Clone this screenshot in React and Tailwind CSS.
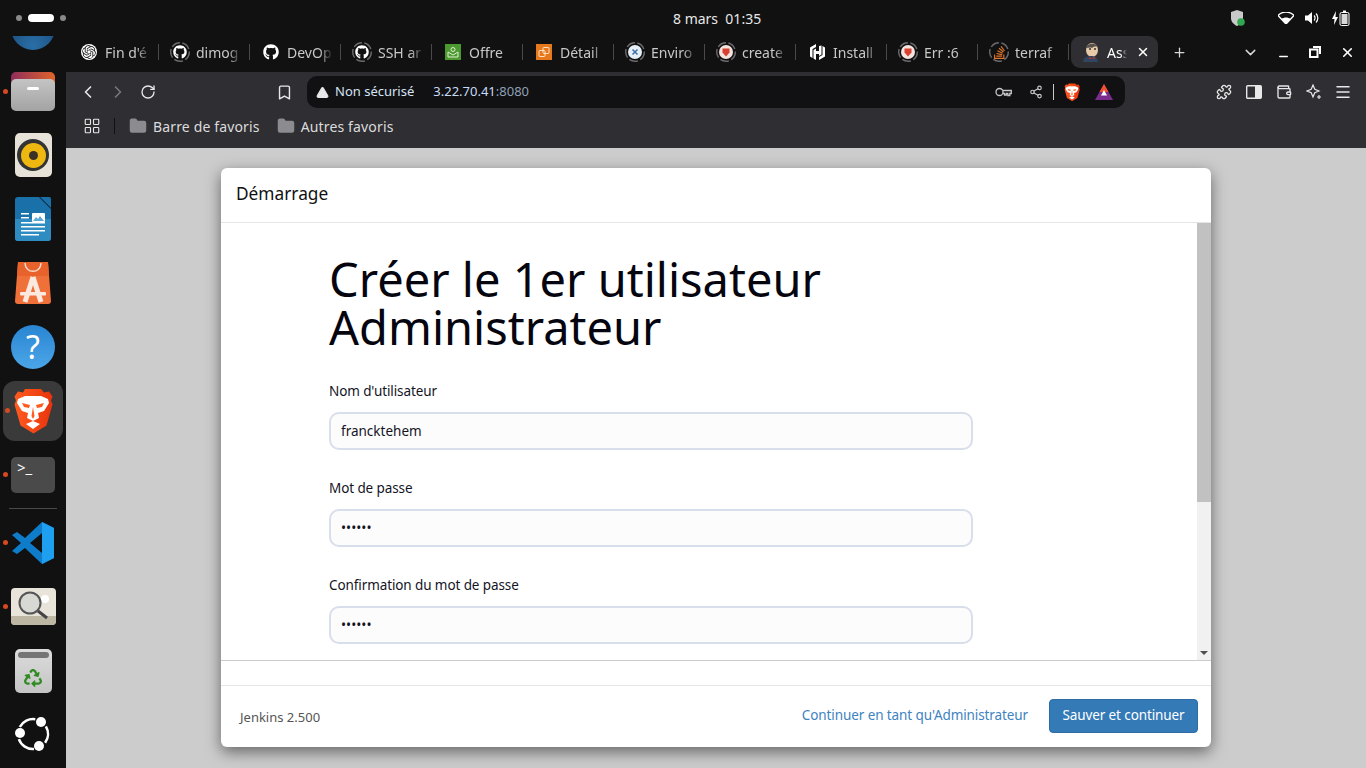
import { FaGithub, FaRecycle } from 'react-icons/fa';
import { SiOpenai, SiStackoverflow } from 'react-icons/si';
import {
  ChevronLeft, ChevronRight, RotateCw, Bookmark, TriangleAlert, Share2, Puzzle, Wallet, Menu,
  X, Plus, ChevronDown, Minus, LayoutGrid, Folder,
} from 'lucide-react';

const font = { fontFamily: '"Noto Sans", sans-serif' };

function BraveLogo({ size = 40 }) {
  return (
    <svg width={size} height={size * 1.15} viewBox="0 0 40 46">
      <defs>
        <linearGradient id="braveFill" x1="0" y1="0" x2="1" y2="0">
          <stop offset="0" stopColor="#ff5a1f" />
          <stop offset="1" stopColor="#e8340c" />
        </linearGradient>
      </defs>
      <path d="M12 1h16l3 3.500 5-1 3.500 5-1.500 4 1.500 4-6 21-13 8-13-8-6-21 1.500-4-1.500-4 3.500-5 5 1z" fill="url(#braveFill)" />
      <path d="M5 11l7-3h16l7 3 1 4-5 8-6 2 1 5-6 3-6-3 1-5-6-2-5-8z" fill="#fff" />
      <path d="M9 15l8 2-1 3-5-1zM31 15l-8 2 1 3 5-1z" fill="#ff5a1f" />
      <path d="M20 19l-1.500 9 1.500 3 1.500-3z" fill="#ff5a1f" />
      <path d="M13 36l7-3 7 3-7 5z" fill="#fff" />
    </svg>
  );
}

function BatLogo() {
  return (
    <svg width="18" height="16" viewBox="0 0 18 16">
      <path d="M9 0l9 16H0z" fill="#7b2d8e" />
      <path d="M9 0l4.500 8h-9z" fill="#f0502d" />
      <path d="M9 6l3 5.500H6z" fill="#fff" />
    </svg>
  );
}

function HashiIcon() {
  return (
    <svg width="15" height="16" viewBox="0 0 15 16" fill="#fff">
      <path d="M6 0L0 3.500v9l2.500 1.500V5l3.500-2zM9 2v5H6V4.500L3.500 6v8.500L6 16v-6h3v2l2.500-1.500V1.500zM12.500 2v9L9 13v3l6-3.500v-9z" />
    </svg>
  );
}

function JenkinsIcon() {
  return (
    <svg width="20" height="20" viewBox="0 0 20 20">
      <ellipse cx="11" cy="8" rx="6" ry="7" fill="#e8c9a8" />
      <path d="M5 6c1-5 10-6 12-1-3-1-5 0-6 1-2-1-4 0-6 0z" fill="#55504c" />
      <circle cx="9" cy="7" r="1" fill="#333" />
      <circle cx="14" cy="7" r="1" fill="#333" />
      <path d="M2 20c0-4 4-6 8-6s7 2 7 6z" fill="#2f4562" />
      <path d="M8 15l3 1 3-1v2l-3-.5-3 .5z" fill="#b8312f" />
    </svg>
  );
}

function ShieldDot() {
  return (
    <svg width="14" height="14" viewBox="0 0 14 14">
      <circle cx="7" cy="7" r="7" fill="#f4e3df" />
      <path d="M3.500 3.500h7v4L7 11.500l-3.500-4z" fill="#d8412f" />
    </svg>
  );
}

function EnvIcon() {
  return (
    <svg width="14" height="14" viewBox="0 0 14 14">
      <circle cx="7" cy="7" r="7" fill="#e6eef8" />
      <path d="M4.500 4.500l5 5M9.500 4.500l-5 5" stroke="#3f6ea8" strokeWidth="1.500" />
    </svg>
  );
}

function OfferIcon() {
  return (
    <div className="flex h-4 w-4 items-center justify-center bg-[#4c9a2f]">
      <svg width="12" height="12" viewBox="0 0 12 12" fill="none" stroke="#dff0d5" strokeWidth="1">
        <circle cx="6" cy="3.500" r="2" />
        <path d="M1 6v5h10V6L6 9z" />
      </svg>
    </div>
  );
}

function DetailIcon() {
  return (
    <div className="flex h-4 w-4 items-center justify-center bg-[#e8791a]">
      <svg width="12" height="12" viewBox="0 0 12 12" fill="none" stroke="#fbe3cd" strokeWidth="1">
        <rect x="1" y="4.500" width="6" height="6" rx="1" />
        <rect x="5" y="1.500" width="6" height="6" rx="1" />
      </svg>
    </div>
  );
}

function Ring() {
  return (
    <svg className="absolute inset-0" width="20" height="20" viewBox="0 0 20 20" fill="none">
      <circle cx="10" cy="10" r="9.300" stroke="#6b6b6e" strokeWidth="1.400" strokeDasharray="9 2.500" />
    </svg>
  );
}

function KeyIcon() {
  return (
    <svg width="17" height="10" viewBox="0 0 17 10" fill="none" stroke="#c8c8c8" strokeWidth="1.300">
      <circle cx="4.500" cy="5" r="3.500" />
      <path d="M8 3.500h8.300v3h-1.500v2h-2v-2h-1.500v1.500H9.500V6.500H8" />
    </svg>
  );
}

const tabs = [
  { label: "Fin d'é", icon: <SiOpenai className="rounded-full bg-white p-[1px] text-[#222]" size={16} /> },
  { label: 'dimog', ring: true, icon: <FaGithub className="text-white" size={14} /> },
  { label: 'DevOp', icon: <FaGithub className="text-white" size={16} /> },
  { label: 'SSH ar', ring: true, icon: <FaGithub className="text-white" size={14} /> },
  { label: 'Offre', icon: <OfferIcon /> },
  { label: 'Détail', icon: <DetailIcon /> },
  { label: 'Enviro', ring: true, icon: <EnvIcon /> },
  { label: 'create', ring: true, icon: <ShieldDot /> },
  { label: 'Install', icon: <HashiIcon /> },
  { label: 'Err :6', ring: true, icon: <ShieldDot /> },
  { label: 'terraf', ring: true, icon: <SiStackoverflow className="text-[#e0752c]" size={13} /> },
];

function Tab({ tab }) {
  return (
    <div className="flex h-4 w-[91px] shrink-0 items-center border-r border-[#4a4a4d] pl-[11px]">
      <div className="relative flex h-5 w-5 shrink-0 items-center justify-center">
        {tab.ring && <Ring />}
        {tab.icon}
      </div>
      <span className="ml-[6px] w-[46px] whitespace-nowrap text-[14px] text-[#c8c8c8] [mask-image:linear-gradient(to_right,black_70%,transparent)]">
        {tab.label}
      </span>
    </div>
  );
}

function TopBar() {
  return (
    <div className="relative flex h-9 shrink-0 items-center bg-[#111112] pl-4 pr-4">
      <div className="flex items-center gap-[6px]">
        <div className="h-[6px] w-[6px] rounded-full bg-[#8a8a8a]" />
        <div className="h-2 w-[26px] rounded-full bg-white" />
        <div className="h-[6px] w-[6px] rounded-full bg-[#8a8a8a]" />
      </div>
      <div className="ml-[607px] w-[90px] whitespace-pre text-[14px] text-[#e8e8e8]">8 mars  01:35</div>
      <div className="ml-auto flex items-center">
        <svg width="16" height="18" viewBox="0 0 16 18">
          <path d="M7 1l6 2v6c0 4-3 6.500-6 8-3-1.500-6-4-6-8V3z" fill="#c9c9c9" />
          <circle cx="11" cy="13" r="3.800" fill="#2fa84f" />
        </svg>
        <svg className="ml-[32px]" width="16" height="12" viewBox="0 0 16 12">
          <path d="M8 12L0 3.500C4.500-1 11.500-1 16 3.500z" fill="none" stroke="#fff" strokeWidth="1.400" />
          <path d="M8 12L3.500 7c2.500-2 6.500-2 9 0z" fill="#fff" />
        </svg>
        <svg className="ml-[11px]" width="15" height="14" viewBox="0 0 15 14" fill="#fff">
          <path d="M0 4.500h3L7 1v12L3 9.500H0z" />
          <path d="M9 4.500a3.500 3.500 0 0 1 0 5M11 2.500a6.500 6.500 0 0 1 0 9" fill="none" stroke="#fff" strokeWidth="1.200" />
        </svg>
        <svg className="ml-[12px]" width="18" height="16" viewBox="0 0 18 16">
          <path d="M4 1L0 9h2.500L2 15l4-8H3.500z" fill="#fff" />
          <rect x="8" y="2.500" width="9" height="13" rx="1.500" fill="none" stroke="#fff" />
          <rect x="9.500" y="4" width="6" height="10" fill="#d9d9d9" />
          <rect x="11" y="0.500" width="3" height="2" fill="#fff" />
        </svg>
      </div>
    </div>
  );
}

function DockDot() {
  return <div className="absolute left-[3px] top-1/2 -mt-[3px] h-[5px] w-[5px] rounded-full bg-[#d8491f]" />;
}

function Dock() {
  return (
    <div className="flex w-[66px] shrink-0 flex-col items-center bg-[#111112]">
      <div className="h-[14px] w-[44px] overflow-hidden">
        <div className="-mt-[30px] h-[44px] w-[44px] rounded-full bg-[radial-gradient(circle_at_50%_90%,#2a6fa8,#123a63)]" />
      </div>

      <div className="relative mt-[22px] flex w-full justify-center">
        <DockDot />
        <div className="relative h-[39px] w-[44px]">
          <div className="absolute left-0 top-0 h-[20px] w-[44px] rounded-t-[5px] bg-[linear-gradient(to_right,#8f2d5c,#e0642a)]" />
          <div className="absolute left-0 right-0 top-[7px] flex h-[32px] justify-center rounded-[5px] bg-[linear-gradient(#c4c4c4,#a3a3a3)] pt-[8px]">
            <div className="h-[3px] w-[12px] rounded-sm bg-white" />
          </div>
        </div>
      </div>

      <div className="mt-[22px] flex h-[44px] w-[37px] items-center justify-center rounded-[5px] bg-[#e6e2d8]">
        <div className="flex h-[32px] w-[32px] items-center justify-center rounded-full bg-[#333]">
          <div className="flex h-[25px] w-[25px] items-center justify-center rounded-full bg-[#efb810]">
            <div className="h-[9px] w-[9px] rounded-full bg-[#3a3226]" />
          </div>
        </div>
      </div>

      <svg className="mt-[20px]" width="36" height="44" viewBox="0 0 36 44">
        <path d="M3 0h21l12 12v29a3 3 0 0 1-3 3H3a3 3 0 0 1-3-3V3a3 3 0 0 1 3-3z" fill="#1a70a8" />
        <path d="M0 22h36v19a3 3 0 0 1-3 3H3a3 3 0 0 1-3-3z" fill="#2e8cc0" />
        <path d="M25 0h9a2 2 0 0 1 2 2v9z" fill="#1a70a8" />
        <rect x="6" y="16" width="8" height="1.500" fill="#fff" />
        <rect x="6" y="20" width="8" height="1.500" fill="#fff" />
        <rect x="17" y="16" width="13" height="9" rx="1" fill="#fff" />
        <path d="M18 24l3-4 2 2 2-3 4 5z" fill="#5da8d5" />
        <rect x="6" y="25" width="24" height="1.500" fill="#fff" />
        <rect x="6" y="29" width="24" height="1.500" fill="#fff" />
        <rect x="6" y="33" width="24" height="1.500" fill="#fff" />
        <rect x="6" y="37" width="18" height="1.500" fill="#fff" />
      </svg>

      <svg className="mt-[21px]" width="36" height="42" viewBox="0 0 36 42">
        <path d="M3 0h30l3 39a3 3 0 0 1-3 3H3a3 3 0 0 1-3-3z" fill="#f0703a" />
        <path d="M3 0h30l1 14H2z" fill="#e8622c" />
        <path d="M10 1c0 11 16 11 16 0" fill="none" stroke="#f6d8c8" strokeWidth="1.500" />
        <path d="M18 15L10 40M18 15l8 25" fill="none" stroke="#fbe9df" strokeWidth="5" />
        <rect x="5" y="30" width="26" height="3.500" rx="1" fill="#fbe9df" />
      </svg>

      <div className="mt-[21px] flex h-[44px] w-[44px] items-center justify-center rounded-full bg-[linear-gradient(#2a85d3,#4ba6e8)] text-[32px] text-white">?</div>

      <div className="relative mt-[12px] flex h-[60px] w-[60px] items-center justify-center rounded-[12px] bg-[#3a3a3a]">
        <div className="absolute left-[2px] top-1/2 -mt-[3px] h-[5px] w-[5px] rounded-full bg-[#d8491f]" />
        <BraveLogo size={40} />
      </div>

      <div className="relative mt-[16px] flex w-full justify-center">
        <DockDot />
        <div className="h-[36px] w-[44px] rounded-[5px] bg-[#4a4a4a] pl-[6px] pt-[1px] text-[15px] leading-[18px] text-white">
          &gt;_
        </div>
      </div>

      <div className="mt-[15px] h-px w-[48px] bg-[#4a4a4a]" />

      <div className="relative mt-[13px] flex w-full justify-center">
        <DockDot />
        <svg width="42" height="42" viewBox="0 0 42 42">
          <path d="M30 0l12 6v30l-12 6-17-16-8 6-5-3 9-8-9-8 5-3 8 6z" fill="#0f7cc9" />
          <path d="M30 0l12 6v30l-12 6z" fill="#1f9ff0" />
          <path d="M30 11L18 21l12 10z" fill="#111112" />
        </svg>
      </div>

      <div className="relative mt-[24px] flex w-full justify-center">
        <DockDot />
        <svg width="45" height="37" viewBox="0 0 45 37">
          <rect width="45" height="37" rx="4" fill="#e8e4da" />
          <path d="M0 28h45v5a4 4 0 0 1-4 4H4a4 4 0 0 1-4-4z" fill="#bdb6a3" />
          <circle cx="34" cy="11" r="4" fill="#fff" />
          <circle cx="19" cy="15" r="10.500" fill="#d8d8d4" stroke="#555" strokeWidth="2" />
          <path d="M27 23l9 7" stroke="#444" strokeWidth="3" />
        </svg>
      </div>

      <div className="mt-[24px] flex h-[44px] w-[37px] flex-col items-center rounded-[5px] bg-[linear-gradient(#dcdcdc,#c4c4c4)] pt-[3px]">
        <div className="h-[6px] w-[31px] rounded-sm bg-[#757575]" />
        <FaRecycle className="mt-[11px] text-[#2e8b1f]" size={18} />
      </div>

      <svg className="mt-[24px]" width="36" height="34" viewBox="0 0 36 34">
        <g fill="none" stroke="#fff" strokeWidth="2.600">
          <path d="M30.900 9.300A15 15 0 0 1 30.100 25.800" />
          <path d="M19 32A15 15 0 0 1 3.900 22.100" />
          <path d="M4.800 10A15 15 0 0 1 20.300 2.200" />
        </g>
        <circle cx="5" cy="16" r="5" fill="#fff" />
        <circle cx="26" cy="5" r="5" fill="#fff" />
        <circle cx="24" cy="29" r="5" fill="#fff" />
      </svg>
    </div>
  );
}

function BrowserChrome() {
  return (
    <>
      <div className="flex h-9 shrink-0 items-start bg-[#111112] pl-[2px]">
        <div className="flex h-4 translate-y-2 items-center">
          {tabs.map((t) => <Tab key={t.label} tab={t} />)}
        </div>
        <div className="ml-[2px] flex h-8 w-[87px] shrink-0 items-center rounded-[9px] bg-[#2e2e33] pl-[10px]">
          <JenkinsIcon />
          <span className="ml-[6px] w-[20px] whitespace-nowrap text-[14px] text-white [mask-image:linear-gradient(to_right,black_70%,transparent)]">Ass</span>
          <X className="ml-[9px] text-white" size={14} strokeWidth={2.500} />
        </div>
        <div className="flex h-8 items-center text-[#d8d8d8]">
          <Plus className="ml-[14px]" size={15} />
          <ChevronDown className="ml-[55px]" size={17} />
          <Minus className="ml-[18px] mt-[8px] text-white" size={13} strokeWidth={2.500} />
          <svg className="ml-[19px]" width="12" height="12" viewBox="0 0 12 12" fill="none" stroke="#fff" strokeWidth="2">
            <rect x="1" y="3.500" width="7.500" height="7.500" />
            <path d="M4 1h7v7" />
          </svg>
          <X className="ml-[19px] text-white" size={15} strokeWidth={2.500} />
        </div>
      </div>

      <div className="flex h-10 shrink-0 items-center bg-[#2e2e33] text-[#e8e8e8]">
        <ChevronLeft className="ml-[12px]" size={20} />
        <ChevronRight className="ml-[10px] text-[#77777b]" size={20} />
        <RotateCw className="ml-[12px]" size={16} />
        <Bookmark className="ml-[120px]" size={17} />
        <div className="ml-[14px] flex h-8 w-[818px] items-center rounded-[10px] bg-[#111114] pl-[9px] pr-[12px] text-[13px]">
          <TriangleAlert className="fill-[#e8e8e8] text-[#e8e8e8]" size={13} />
          <span className="ml-[6px] text-[#d6e4f5]">Non sécurisé</span>
          <span className="ml-[19px] text-[#c8ddf5]">3.22.70.41<span className="text-[#8fa0b5]">:8080</span></span>
          <div className="ml-auto flex items-center">
            <KeyIcon />
            <Share2 className="ml-[17px] text-[#c8c8c8]" size={14} />
            <div className="ml-[10px] h-4 w-px bg-[#c8c8c8]" />
            <div className="ml-[10px]"><BraveLogo size={16} /></div>
            <div className="ml-[15px]"><BatLogo /></div>
          </div>
        </div>
        <Puzzle className="ml-[91px]" size={16} />
        <svg className="ml-[14px]" width="16" height="14" viewBox="0 0 16 14">
          <rect x="0.700" y="0.700" width="14.600" height="12.600" rx="1" fill="none" stroke="#e8e8e8" strokeWidth="1.400" />
          <rect x="9" y="1" width="6" height="12" fill="#e8e8e8" />
        </svg>
        <Wallet className="ml-[14px]" size={16} />
        <svg className="ml-[14px]" width="16" height="16" viewBox="0 0 16 16" fill="none" stroke="#e8e8e8" strokeWidth="1.200">
          <path d="M7 1l1.800 4.200L13 7l-4.200 1.800L7 13l-1.800-4.200L1 7l4.200-1.800z" />
          <path d="M13 11v4M11 13h4" />
        </svg>
        <Menu className="ml-[12px]" size={18} />
      </div>

      <div className="flex h-9 shrink-0 items-center bg-[#2e2e33] pb-[8px] text-[14px] tracking-[0.15px] text-[#dcdcdc]">
        <LayoutGrid className="ml-[17px] text-[#e8e8e8]" size={18} strokeWidth={1.500} />
        <div className="ml-[13px] h-4 w-px bg-[#111]" />
        <Folder className="ml-[14px] fill-[#8c8c90] text-[#8c8c90]" size={18} />
        <span className="ml-[6px]">Barre de favoris</span>
        <Folder className="ml-[17px] fill-[#8c8c90] text-[#8c8c90]" size={18} />
        <span className="ml-[6px]">Autres favoris</span>
      </div>
    </>
  );
}

function Field({ label, type = 'text', value }) {
  return (
    <div className="mb-[28px]">
      <label className="mb-[11px] block text-[13.5px] leading-[20px] tracking-[-0.1px] text-[#14141f]">{label}</label>
      <input
        readOnly
        type={type}
        defaultValue={value}
        className="block h-[38px] w-[644px] rounded-[10px] border-2 border-[#d8deea] bg-[#fcfcfd] px-[10px] text-[13.5px] text-[#14141f] outline-none"
      />
    </div>
  );
}

function SetupDialog() {
  return (
    <div className="flex h-[579px] w-[990px] flex-col overflow-hidden rounded-[6px] bg-white shadow-[0_5px_15px_rgba(0,0,0,0.5)]">
      <div className="flex h-[55px] shrink-0 items-center border-b border-[#e5e5e5] pb-[2px] pl-[15px] text-[17.300px] text-[#111]">Démarrage</div>
      <div className="flex h-[438px] shrink-0 border-b border-[#cccccc]">
        <div className="min-w-0 flex-1 overflow-hidden pl-[108px] pt-[32px]">
          <h1 className="mb-[30px] w-[560px] text-[47px] leading-[48px] text-[#050510]">Créer le 1er utilisateur Administrateur</h1>
          <Field label="Nom d'utilisateur" value="francktehem" />
          <Field label="Mot de passe" type="password" value="secret" />
          <Field label="Confirmation du mot de passe" type="password" value="secret" />
        </div>
        <div className="flex w-[14px] shrink-0 flex-col bg-[#f1f1f1]">
          <div className="h-[279px] bg-[#c1c1c1]" />
          <div className="mt-auto flex h-[14px] items-center justify-center">
            <div className="h-0 w-0 border-x-[4px] border-t-[4px] border-x-transparent border-t-[#505050]" />
          </div>
        </div>
      </div>
      <div className="h-[25px] shrink-0 border-b border-[#e5e5e5]" />
      <div className="flex flex-1 items-center pl-[19px] pr-[13px] pb-[2px]">
        <span className="mt-[4px] text-[13px] text-[#555]">Jenkins 2.500</span>
        <a className="ml-auto text-[13.5px] tracking-[-0.1px] text-[#4083bf]">Continuer en tant qu'Administrateur</a>
        <button className="ml-[21px] h-[34px] w-[149px] rounded-[4px] border border-[#2e6da4] bg-[#337ab7] text-[13.5px] tracking-[-0.1px] text-white">Sauver et continuer</button>
      </div>
    </div>
  );
}

export default function App() {
  return (
    <div className="flex h-[768px] w-[1366px] flex-col overflow-hidden" style={font}>
      <TopBar />
      <div className="flex min-h-0 flex-1">
        <Dock />
        <div className="flex min-w-0 flex-1 flex-col">
          <BrowserChrome />
          <div className="flex-1 bg-[#cccccc] pl-[155px] pt-[20px]">
            <SetupDialog />
          </div>
        </div>
      </div>
    </div>
  );
}
